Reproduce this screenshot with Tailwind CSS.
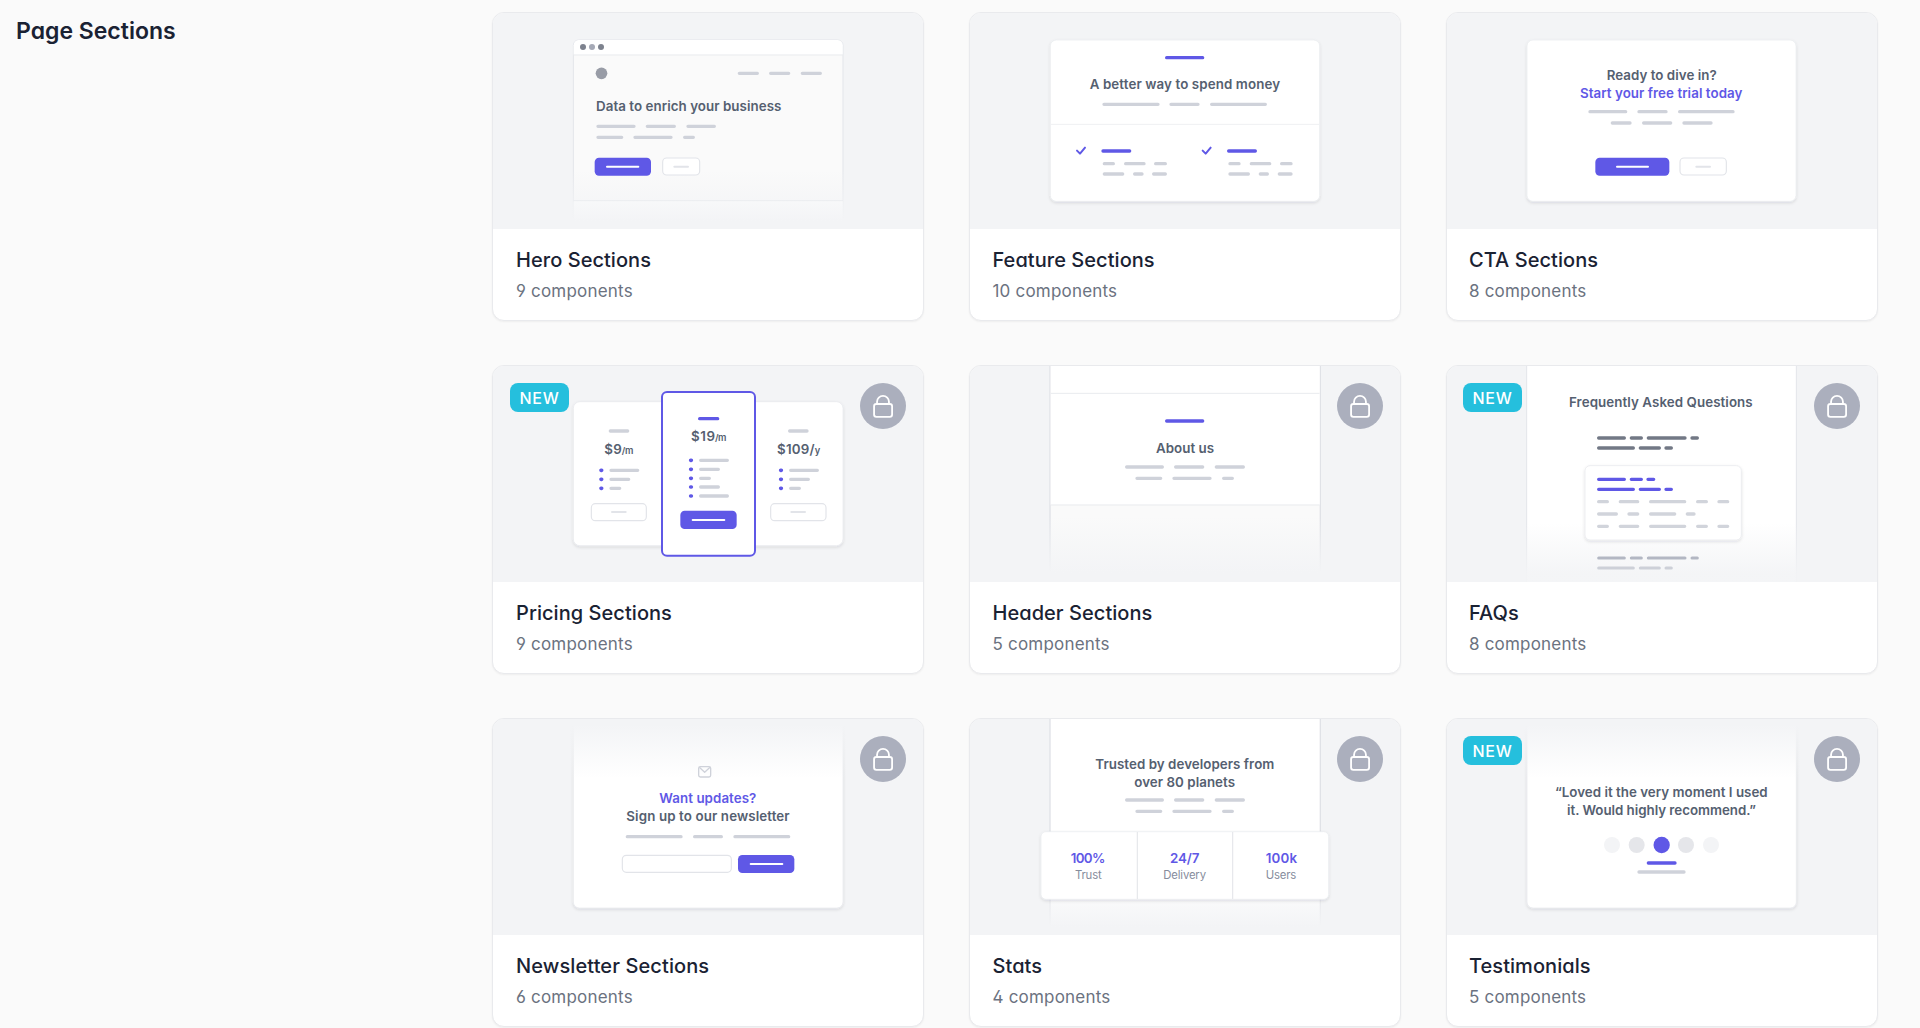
<!DOCTYPE html>
<html lang="en">
<head>
<meta charset="utf-8">
<title>Page Sections</title>
<script src="https://cdn.jsdelivr.net/npm/@tailwindcss/browser@4"></script>
</head>
<body class="h-[1028px] overflow-hidden bg-[#fafafa] font-['Inter',sans-serif] [font-feature-settings:'cv02','cv03','cv04','cv11'] [&_text]:[font-feature-settings:normal]">

<!-- Shared symbols, shadow and fades -->
<svg class="absolute size-0" aria-hidden="true">
  <defs>
    <filter id="shadow" x="-10%" y="-10%" width="120%" height="125%">
      <feDropShadow dx="0" dy="4" stdDeviation="4" flood-color="#111827" flood-opacity=".12"/>
    </filter>
    <linearGradient id="fade-down" x1="0" y1="0" x2="0" y2="1">
      <stop offset="0" stop-color="#f3f4f6" stop-opacity="0"/>
      <stop offset=".85" stop-color="#f3f4f6"/>
      <stop offset="1" stop-color="#f3f4f6"/>
    </linearGradient>
    <linearGradient id="fade-up" x1="0" y1="1" x2="0" y2="0">
      <stop offset="0" stop-color="#f3f4f6" stop-opacity="0"/>
      <stop offset=".9" stop-color="#f3f4f6"/>
      <stop offset="1" stop-color="#f3f4f6"/>
    </linearGradient>
    <symbol id="lock" viewBox="0 0 139 139">
      <circle cx="69.5" cy="69.5" r="69.5" fill="#abafbd"/>
      <g fill="none" stroke="#fff" stroke-width="5.5">
        <rect x="42.5" y="63.5" width="54.500" height="39" rx="7"/>
        <path d="M51.500 63V56.500a18 17.500 0 0 1 36 0V63"/>
      </g>
    </symbol>
  </defs>
</svg>

<main class="flex pt-3">
  <div class="w-[492px] shrink-0 pl-4">
    <h2 class="pt-0.5 text-[23px] leading-[34px] font-semibold text-[#1a2233]">Page Sections</h2>
  </div>

  <div class="grid grid-cols-[432px_432px_432px] auto-rows-[309px] gap-x-[45px] gap-y-11">

    <!-- Hero Sections -->
    <a class="relative block overflow-hidden rounded-xl border border-[#e9eaed] bg-white shadow-xs">
      <svg class="block h-[216px] w-[430px] bg-[#f3f4f6] font-semibold text-[40px]" viewBox="39 39 1290 648">
        <path d="M280 700V136a16 16 0 0 1 16-16H1073a16 16 0 0 1 16 16V700z" fill="#fafafa" stroke="#e3e5ea" stroke-width="3"/>
        <path d="M281 164V136a16 16 0 0 1 16-16H1072a16 16 0 0 1 16 16V164z" fill="#fff"/>
        <path d="M281 603H1088V690H281z" fill="#fff"/>
        <path d="M280 165H1089" stroke="#e9ebee" stroke-width="3"/>
        <path d="M280 602H1089" stroke="#dfe2e7" stroke-width="3"/>
        <circle cx="309" cy="141" r="9" fill="#7d828e"/><circle cx="336" cy="141" r="9" fill="#a5a9b6"/><circle cx="363" cy="141" r="9" fill="#7d828e"/>
        <circle cx="364.500" cy="220" r="17.500" fill="#989ca6"/>
        <path d="M276 510H1093V690H276z" fill="url(#fade-down)"/>
        <text x="348" y="332" textLength="556" fill="#556070">Data to enrich your business</text>
        <path class="fill-none stroke-[#cfd2da] stroke-[10px] [stroke-linecap:round]" d="M778 220H832M872 220H926M967 220H1021M354 379H462M502 379H583M624 379H703M354 412H425M465 412H573M614 412H640"/>
        <rect x="344" y="473" width="169" height="54" rx="13" fill="#5f58e6"/><path d="M381 500H475" stroke="#fff" stroke-width="6" stroke-linecap="round"/>
        <rect x="548" y="474" width="111" height="51" rx="12" fill="#fff" stroke="#e2e4e9" stroke-width="3.500"/><path d="M583 500H624" stroke="#e2e4e9" stroke-width="6" stroke-linecap="round"/>
      </svg>
      <div class="px-[23px] pt-[15px]">
        <h3 class="text-[20px] leading-8 font-medium tracking-[0.05px] text-[#1a2233]">Hero Sections</h3>
        <p class="mt-px text-[17px] leading-7 tracking-[0.2px] text-[#6b7280]">9 components</p>
      </div>
    </a>

    <!-- Feature Sections -->
    <a class="relative block overflow-hidden rounded-xl border border-[#e9eaed] bg-white shadow-xs">
      <svg class="block h-[216px] w-[430px] bg-[#f3f4f6] font-semibold text-[40px]" viewBox="30 39 1290 648">
        <rect x="271" y="120" width="808" height="484" rx="18" fill="#fff" stroke="#e9ebee" stroke-width="2" filter="url(#shadow)"/>
        <path d="M272 373H1078" stroke="#eff0f2" stroke-width="3"/>
        <text x="389" y="268" textLength="571" fill="#556070">A better way to spend money</text>
        <g class="fill-none stroke-[10px] [stroke-linecap:round]">
          <path class="stroke-[#5f58e6]" d="M620 173H728M429 453H509M806 453H886"/>
          <path class="stroke-[#cfd2da]" d="M432 313H594M633 313H714M755 313H916M433 491H460M497 491H552M587 491H616M433 522H488M524 522H546M581 522H616M810 491H837M874 491H929M965 491H993M810 522H865M901 522H922M958 522H993"/>
        </g>
        <path class="fill-none stroke-[#5f58e6] stroke-[6px]" stroke-linecap="round" stroke-linejoin="round" d="M351 452L360 461L375 443M728 452L737 461L752 443"/>
      </svg>
      <div class="pr-[23px] pl-[22.5px] pt-[15px]">
        <h3 class="text-[20px] leading-8 font-medium tracking-[0.05px] text-[#1a2233]">Feature Sections</h3>
        <p class="mt-px text-[17px] leading-7 tracking-[0.2px] text-[#6b7280]">10 components</p>
      </div>
    </a>

    <!-- CTA Sections -->
    <a class="relative block overflow-hidden rounded-xl border border-[#e9eaed] bg-white shadow-xs">
      <svg class="block h-[216px] w-[430px] bg-[#f3f4f6] font-semibold text-[40px]" viewBox="33 39 1290 648">
        <rect x="273" y="120" width="807" height="484" rx="18" fill="#fff" stroke="#e9ebee" stroke-width="2" filter="url(#shadow)"/>
        <text x="512" y="241" textLength="330" fill="#556070">Ready to dive in?</text>
        <text x="432" y="295" textLength="487" fill="#5f58e6">Start your free trial today</text>
        <path class="fill-none stroke-[#cfd2da] stroke-[10px] [stroke-linecap:round]" d="M462 335H569M609 335H690M731 335H891M529 369H582M623 369H704M744 369H825"/>
        <rect x="478" y="473" width="222" height="54" rx="13" fill="#5f58e6"/><path d="M543 500H636" stroke="#fff" stroke-width="6" stroke-linecap="round"/>
        <rect x="732" y="474" width="139" height="51" rx="12" fill="#fff" stroke="#e2e4e9" stroke-width="3.500"/><path d="M781 500H822" stroke="#e2e4e9" stroke-width="6" stroke-linecap="round"/>
      </svg>
      <div class="pr-[23px] pl-[22px] pt-[15px]">
        <h3 class="text-[20px] leading-8 font-medium tracking-[0.05px] text-[#1a2233]">CTA Sections</h3>
        <p class="mt-px text-[17px] leading-7 tracking-[0.2px] text-[#6b7280]">8 components</p>
      </div>
    </a>

    <!-- Pricing Sections -->
    <a class="relative block overflow-hidden rounded-xl border border-[#e9eaed] bg-white shadow-xs">
      <svg class="block h-[216px] w-[430px] bg-[#f3f4f6] font-semibold text-[40px]" viewBox="39 48 1290 648">
        <rect x="280" y="155" width="809" height="432" rx="20" fill="#fff" stroke="#e5e7eb" stroke-width="2" filter="url(#shadow)"/>
        <rect x="546" y="126" width="279" height="491" rx="15" fill="#fff" stroke="#5f58e6" stroke-width="6"/>
        <g fill="#556070">
          <text x="373" y="311" textLength="52">$9</text><text x="425" y="311" textLength="35" class="text-[28px]">/m</text>
          <text x="633" y="274" textLength="72">$19</text><text x="705" y="274" textLength="34" class="text-[28px]">/m</text>
          <text x="891" y="311" textLength="113">$109/</text><text x="1004" y="311" class="text-[28px]">y</text>
        </g>
        <g class="fill-none stroke-[10px] [stroke-linecap:round]">
          <path class="stroke-[#cfd2da]" d="M391 243H443M929 243H981M393 361H473M393 388H446M393 415H419M662 331H742M662 358H715M662 385H688M662 411H715M662 438H742M932 361H1012M932 388H985M932 415H958"/>
          <path class="stroke-[#5f58e6]" d="M659 206H713"/>
        </g>
        <path class="fill-none stroke-[#5f58e6] stroke-[11px] [stroke-linecap:round]" d="M363 361H365M363 388H365M363 415H365M632 331H634M632 358H634M632 385H634M632 411H634M632 438H634M902 361H904M902 388H904M902 415H904"/>
        <rect x="334" y="461" width="165" height="51" rx="12" fill="#fff" stroke="#e2e4e9" stroke-width="3.500"/><path d="M396 486H437" stroke="#e2e4e9" stroke-width="6" stroke-linecap="round"/>
        <rect x="872" y="461" width="166" height="51" rx="12" fill="#fff" stroke="#e2e4e9" stroke-width="3.500"/><path d="M934 486H975" stroke="#e2e4e9" stroke-width="6" stroke-linecap="round"/>
        <rect x="601" y="482" width="169" height="55" rx="13" fill="#5f58e6"/><path d="M638 510H733" stroke="#fff" stroke-width="6" stroke-linecap="round"/>
      </svg>
      <span class="absolute top-[17px] left-[17px] flex h-[29px] w-[59px] items-center justify-center rounded-lg bg-[#25bfdd] text-base font-medium tracking-[0.8px] text-white">NEW</span>
      <svg class="absolute top-[17px] right-[17px] size-[46px]"><use href="#lock"/></svg>
      <div class="px-[23px] pt-[15px]">
        <h3 class="text-[20px] leading-8 font-medium tracking-[0.05px] text-[#1a2233]">Pricing Sections</h3>
        <p class="mt-px text-[17px] leading-7 tracking-[0.2px] text-[#6b7280]">9 components</p>
      </div>
    </a>

    <!-- Header Sections -->
    <a class="relative block overflow-hidden rounded-xl border border-[#e9eaed] bg-white shadow-xs">
      <svg class="block h-[216px] w-[430px] bg-[#f3f4f6] font-semibold text-[40px]" viewBox="30 48 1290 648">
        <rect x="270" y="20" width="811" height="720" fill="#fafafa" stroke="#e0e2e7" stroke-width="4"/>
        <path d="M272 40H1079V464H272z" fill="#fff"/>
        <path d="M272 130H1079M272 465H1079" stroke="#e9ebee" stroke-width="3"/>
        <path d="M266 500H1085V698H266z" fill="url(#fade-down)"/>
        <text x="588" y="308" textLength="174" fill="#556070">About us</text>
        <g class="fill-none stroke-[10px] [stroke-linecap:round]">
          <path class="stroke-[#5f58e6]" d="M620 213H728"/>
          <path class="stroke-[#cfd2da]" d="M500 351H607M647 351H728M769 351H850M531 385H602M642 385H750M791 385H817"/>
        </g>
      </svg>
      <svg class="absolute top-[17px] right-[17px] size-[46px]"><use href="#lock"/></svg>
      <div class="pr-[23px] pl-[22.5px] pt-[15px]">
        <h3 class="text-[20px] leading-8 font-medium tracking-[0.05px] text-[#1a2233]">Header Sections</h3>
        <p class="mt-px text-[17px] leading-7 tracking-[0.2px] text-[#6b7280]">5 components</p>
      </div>
    </a>

    <!-- FAQs -->
    <a class="relative block overflow-hidden rounded-xl border border-[#e9eaed] bg-white shadow-xs">
      <svg class="block h-[216px] w-[430px] bg-[#f3f4f6] font-semibold text-[40px]" viewBox="33 48 1290 648">
        <rect x="272" y="20" width="809" height="720" fill="#fff" stroke="#e3e5ea" stroke-width="3"/>
        <path d="M268 520H1085V698H268z" fill="url(#fade-down)" opacity=".92"/>
        <g class="fill-none stroke-[9px] [stroke-linecap:round]">
          <path class="stroke-[#b3b7c3]" d="M488 624H565M586 624H616M637 624H747M768 624H784"/>
          <path class="stroke-[#cdd0d8]" d="M488 654H592M613 654H670M690 654H706"/>
        </g>
        <rect x="447" y="347" width="469" height="223" rx="15" fill="#fff" stroke="#e9ebee" stroke-width="2.500" filter="url(#shadow)"/>
        <text x="399" y="170" textLength="551" fill="#556070">Frequently Asked Questions</text>
        <g class="fill-none stroke-[10px] [stroke-linecap:round]">
          <path class="stroke-[#727885]" d="M488 264H565M586 264H616M637 264H747M768 264H784M488 294H592M613 294H670M690 294H706"/>
          <path class="stroke-[#5f58e6]" d="M488 388H565M586 388H616M636 388H653M488 418H592M613 418H670M690 418H706"/>
          <path class="stroke-[#d1d4db]" d="M488 455H514M553 455H605M644 455H746M785 455H811M849 455H875M488 492H541M579 492H605M644 492H716M754 492H774M488 529H514M553 529H605M644 529H746M785 529H811M849 529H875"/>
        </g>
      </svg>
      <span class="absolute top-[17px] left-4 flex h-[29px] w-[59px] items-center justify-center rounded-lg bg-[#25bfdd] text-base font-medium tracking-[0.8px] text-white">NEW</span>
      <svg class="absolute top-[17px] right-[17px] size-[46px]"><use href="#lock"/></svg>
      <div class="pr-[23px] pl-[22px] pt-[15px]">
        <h3 class="text-[20px] leading-8 font-medium tracking-[0.05px] text-[#1a2233]">FAQs</h3>
        <p class="mt-px text-[17px] leading-7 tracking-[0.2px] text-[#6b7280]">8 components</p>
      </div>
    </a>

    <!-- Newsletter Sections -->
    <a class="relative block overflow-hidden rounded-xl border border-[#e9eaed] bg-white shadow-xs">
      <svg class="block h-[216px] w-[430px] bg-[#f3f4f6] font-semibold text-[40px]" viewBox="39 57 1290 648">
        <rect x="280" y="20" width="809" height="604" rx="18" fill="#fff" stroke="#e5e7eb" stroke-width="2" filter="url(#shadow)"/>
        <path d="M266 57H1103V235H266z" fill="url(#fade-up)"/>
        <g class="fill-none stroke-[#cfd2da] stroke-[4px]" stroke-linejoin="round"><rect x="656" y="200" width="36" height="31" rx="5"/><path d="M658 202L674 217L690 202"/></g>
        <text x="538" y="310" textLength="291" fill="#5f58e6">Want updates?</text>
        <text x="439" y="364" textLength="490" fill="#556070">Sign up to our newsletter</text>
        <path class="fill-none stroke-[#cfd2da] stroke-[10px] [stroke-linecap:round]" d="M442 410H603M644 410H724M765 410H926"/>
        <rect x="427" y="466" width="327" height="51" rx="12" fill="#fff" stroke="#e2e4e9" stroke-width="3.500"/>
        <rect x="774" y="465" width="169" height="54" rx="13" fill="#5f58e6"/><path d="M812 492H907" stroke="#fff" stroke-width="6" stroke-linecap="round"/>
      </svg>
      <svg class="absolute top-[17px] right-[17px] size-[46px]"><use href="#lock"/></svg>
      <div class="px-[23px] pt-[15px]">
        <h3 class="text-[20px] leading-8 font-medium tracking-[0.1px] text-[#1a2233]">Newsletter Sections</h3>
        <p class="mt-px text-[17px] leading-7 tracking-[0.2px] text-[#6b7280]">6 components</p>
      </div>
    </a>

    <!-- Stats -->
    <a class="relative block overflow-hidden rounded-xl border border-[#e9eaed] bg-white shadow-xs">
      <svg class="block h-[216px] w-[430px] bg-[#f3f4f6] font-semibold text-[40px]" viewBox="30 57 1290 648">
        <rect x="270" y="20" width="811" height="720" fill="#fff" stroke="#e0e2e7" stroke-width="4"/>
        <path d="M266 530H1085V707H266z" fill="url(#fade-down)"/>
        <rect x="243" y="395" width="863" height="203" rx="15" fill="#fff" stroke="#e9ebee" stroke-width="2" filter="url(#shadow)"/>
        <path d="M532 396V597M818 396V597" stroke="#e5e7eb" stroke-width="3.500"/>
        <g fill="#556070">
          <text x="406" y="207" textLength="537">Trusted by developers from</text>
          <text x="523" y="261" textLength="302">over 80 planets</text>
        </g>
        <path class="fill-none stroke-[#cfd2da] stroke-[10px] [stroke-linecap:round]" d="M500 300H607M647 300H728M769 300H850M531 334H602M642 334H750M791 334H817"/>
        <g fill="#5f58e6">
          <text x="332" y="489" textLength="104">100%</text><text x="630" y="489" textLength="88">24/7</text><text x="917" y="489" textLength="94">100k</text>
        </g>
        <g fill="#858c9c" class="text-[34px] font-normal">
          <text x="345" y="536" textLength="80">Trust</text><text x="610" y="536" textLength="128">Delivery</text><text x="917" y="536" textLength="92">Users</text>
        </g>
      </svg>
      <svg class="absolute top-[17px] right-[17px] size-[46px]"><use href="#lock"/></svg>
      <div class="pr-[23px] pl-[22.5px] pt-[15px]">
        <h3 class="text-[20px] leading-8 font-medium tracking-[0.05px] text-[#1a2233]">Stats</h3>
        <p class="mt-px text-[17px] leading-7 tracking-[0.2px] text-[#6b7280]">4 components</p>
      </div>
    </a>

    <!-- Testimonials -->
    <a class="relative block overflow-hidden rounded-xl border border-[#e9eaed] bg-white shadow-xs">
      <svg class="block h-[216px] w-[430px] bg-[#f3f4f6] font-semibold text-[40px]" viewBox="33 57 1290 648">
        <rect x="273" y="20" width="808" height="604" rx="18" fill="#fff" stroke="#e5e7eb" stroke-width="2" filter="url(#shadow)"/>
        <path d="M259 57H1095V235H259z" fill="url(#fade-up)"/>
        <g fill="#556070">
          <text x="357" y="291" textLength="638">“Loved it the very moment I used</text>
          <text x="393" y="345" textLength="567">it. Would highly recommend.”</text>
        </g>
        <circle cx="528" cy="435" r="24" fill="#f3f4f6"/><circle cx="602" cy="435" r="24" fill="#e5e6ea"/><circle cx="677" cy="435" r="24.500" fill="#5f58e6"/><circle cx="750" cy="435" r="24" fill="#e5e6ea"/><circle cx="825" cy="435" r="24" fill="#f3f4f6"/>
        <g class="fill-none stroke-[10px] [stroke-linecap:round]">
          <path class="stroke-[#5f58e6]" d="M637 489H717"/><path class="stroke-[#cfd2da]" d="M609 516H744"/>
        </g>
      </svg>
      <span class="absolute top-[17px] left-4 flex h-[29px] w-[59px] items-center justify-center rounded-lg bg-[#25bfdd] text-base font-medium tracking-[0.8px] text-white">NEW</span>
      <svg class="absolute top-[17px] right-[17px] size-[46px]"><use href="#lock"/></svg>
      <div class="pr-[23px] pl-[22px] pt-[15px]">
        <h3 class="text-[20px] leading-8 font-medium tracking-[0.05px] text-[#1a2233]">Testimonials</h3>
        <p class="mt-px text-[17px] leading-7 tracking-[0.2px] text-[#6b7280]">5 components</p>
      </div>
    </a>

  </div>
</main>
</body>
</html>
